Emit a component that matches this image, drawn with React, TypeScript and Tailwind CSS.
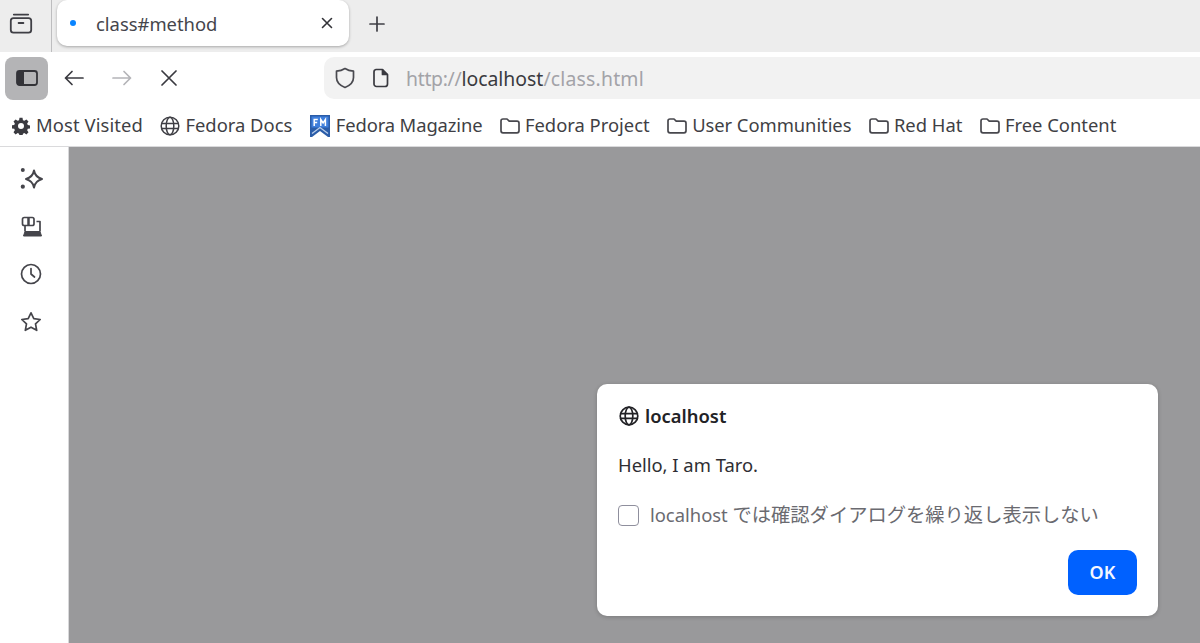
import React from "react";

const FONT = "font-['Noto_Sans','Noto_Sans_CJK_JP',sans-serif]";

function Svg({ size = 20, children, className = "", sw = 1.6 }: { size?: number; children: React.ReactNode; className?: string; sw?: number }) {
  return (
    <svg width={size} height={size} viewBox="0 0 20 20" fill="none" stroke="currentColor" strokeWidth={sw} strokeLinecap="round" strokeLinejoin="round" className={`shrink-0 ${className}`}>
      {children}
    </svg>
  );
}

const Globe = ({ size = 20, sw = 1.6 }: { size?: number; sw?: number }) => (
  <Svg size={size} sw={sw}>
    <circle cx="10" cy="10" r="8.800" />
    <path d="M1.600 7.600h16.800M1.600 12.400h16.800" />
    <ellipse cx="10" cy="10" rx="3.800" ry="8.800" />
  </Svg>
);

const Folder = () => (
  <svg width="20" height="20" viewBox="0 0 20 20" fill="none" stroke="#48484e" strokeWidth={1.7} strokeLinejoin="round" className="shrink-0">
    <path d="M1 5C1 3.800 1.800 3 3 3h4l2.200 2.200H17c1.200 0 2 .8 2 2v7.600c0 1.200-.8 2-2 2H3c-1.200 0-2-.8-2-2z" />
  </svg>
);

const Gear = () => (
  <svg width="18" height="18" viewBox="0 0 24 24" className="shrink-0">
    <path fill="#3a3a40" fillRule="evenodd" d="M10 1h4l.6 3.200 1.900.8 2.700-1.800 2.800 2.800-1.800 2.700.8 1.900 3 .6v4l-3 .6-.8 1.900 1.800 2.700-2.800 2.800-2.700-1.800-1.900.8-.6 3h-4l-.6-3-1.900-.8-2.700 1.800-2.800-2.800 1.800-2.700-.8-1.900-3.200-.6v-4l3.200-.6.8-1.900-1.800-2.700 2.800-2.800 2.700 1.800 1.900-.8zM12 8a4 4 0 1 0 0 8 4 4 0 0 0 0-8z" />
  </svg>
);

const FM = () => (
  <svg width="20" height="22" viewBox="0 0 20 22" className="shrink-0">
    <path fill="#2a5ca8" d="M0 0h20v22l-2 0-8-6-8 6-2 0z" />
    <path fill="#3f7fdc" d="M1.500 1.500h17v11l-8.500 0-8.500 0z" />
    <path fill="none" stroke="#fff" strokeWidth="1.500" d="M4.200 11V4.500h3.600M4.200 7.500h3M10.800 11V4.500l2.300 3.500 2.300-3.500V11" />
    <path fill="none" stroke="#b9cdea" strokeWidth="1.300" d="M2 18.500l8-6 8 6" />
  </svg>
);

const Bookmark = ({ icon, label, cls = "gap-[5px]" }: { icon: React.ReactNode; label: string; cls?: string }) => (
  <div className={`flex items-center text-[#3f3f45] ${cls}`}>
    {icon}
    <span className="whitespace-nowrap pb-[2px]">{label}</span>
  </div>
);

const SideIcon = ({ children, h = "h-[48px]" }: { children: React.ReactNode; h?: string }) => (
  <div className={`flex ${h} items-center justify-center text-[#45454b]`}>{children}</div>
);

export default function App() {
  return (
    <div className={`flex h-[643px] w-[1200px] flex-col overflow-hidden bg-white ${FONT}`}>
      {/* Tab strip */}
      <div className="flex h-[52px] shrink-0 items-start bg-[#ededed]">
        <div className="flex h-[52px] w-[52px] shrink-0 items-center justify-center border-r border-[#bdbdbf] pb-[6px] pr-[9px] text-[#3f3f45]">
          <Svg size={24} sw={1.5}>
            <rect x="1.500" y="6" width="17" height="12" rx="2.200" />
            <path d="M4 3h12M8 10h4" />
          </Svg>
        </div>
        <div className="ml-[5px] flex h-[46px] w-[292px] items-center rounded-[10px] bg-white pl-[13px] pr-[16px] shadow-[0_1px_3px_rgba(0,0,0,0.3)]">
          <span className="h-[6px] w-[6px] rounded-full bg-[#0a84ff]" />
          <span className="ml-[20px] flex-1 pt-[2px] text-[18.4px] text-[#45454b]">class#method</span>
          <svg width="12" height="12" viewBox="0 0 12 12" stroke="#333338" strokeWidth="1.600" strokeLinecap="round">
            <path d="M1.500 1.500l9 9M10.500 1.500l-9 9" />
          </svg>
        </div>
        <div className="ml-[20px] flex h-[48px] items-center text-[#3f3f45]">
          <svg width="16" height="16" viewBox="0 0 16 16" stroke="currentColor" strokeWidth="1.700" strokeLinecap="round">
            <path d="M8 1v14M1 8h14" />
          </svg>
        </div>
      </div>

      {/* Navigation */}
      <div className="flex h-[52px] shrink-0 items-center bg-white pl-[5px] pr-0">
        <div className="flex h-[43px] w-[43px] items-center justify-center rounded-[8px] bg-[#b4b4b6] text-[#333338]">
          <svg width="22" height="18" viewBox="0 0 22 18" fill="none">
            <rect x="1" y="2" width="20" height="14" rx="2.500" stroke="currentColor" strokeWidth="1.800" />
            <path d="M3 2h5v14H3a2 2 0 0 1-2-2V4a2 2 0 0 1 2-2z" fill="currentColor" />
          </svg>
        </div>
        <div className="ml-[16px] text-[#3a3a40]">
          <svg width="20" height="16" viewBox="0 0 20 16" fill="none" stroke="currentColor" strokeWidth="1.700" strokeLinecap="round" strokeLinejoin="round">
            <path d="M19 8H1.500M8 1.500L1.500 8 8 14.500" />
          </svg>
        </div>
        <div className="ml-[28px] text-[#b4b4b8]">
          <svg width="20" height="16" viewBox="0 0 20 16" fill="none" stroke="currentColor" strokeWidth="1.700" strokeLinecap="round" strokeLinejoin="round">
            <path d="M1 8h17.500M12 1.500L18.500 8 12 14.500" />
          </svg>
        </div>
        <div className="ml-[29px] text-[#3a3a40]">
          <svg width="16" height="16" viewBox="0 0 16 16" stroke="currentColor" strokeWidth="1.700" strokeLinecap="round">
            <path d="M1 1l14 14M15 1L1 15" />
          </svg>
        </div>
        <div className="ml-[147px] flex h-[42px] flex-1 items-center rounded-l-[10px] bg-[#f2f2f2] pl-[11px] text-[19.4px]">
          <svg width="20" height="22" viewBox="0 0 20 22" fill="none" stroke="#4a4a50" strokeWidth="1.700" strokeLinejoin="round" className="shrink-0">
            <path d="M10 1.500c2.500 1.600 5 2.400 8.500 2.700v6.300c0 4.700-3.500 8-8.500 10-5-2-8.500-5.300-8.500-10V4.200c3.500-.3 6-1.100 8.500-2.700z" />
          </svg>
          <svg width="16" height="20" viewBox="0 0 16 20" fill="none" stroke="#3a3a40" strokeWidth="1.700" strokeLinejoin="round" className="ml-[18px] shrink-0">
            <path d="M3 1.500h6.500l5 5V16a2.500 2.500 0 0 1-2.500 2.500H3.500A2.500 2.500 0 0 1 1 16V4a2.500 2.500 0 0 1 2-2.500z" />
            <path d="M9.500 1.500v5h5" fill="#3a3a40" />
          </svg>
          <span className="ml-[17px] whitespace-nowrap pt-[2px] text-[#a3a3a8]">
            <span className="tracking-[-0.3px]">http://</span>
            <span className="text-[#3a3a40]">localhost</span>
            <span className="tracking-[0.2px]">/class.html</span>
          </span>
        </div>
      </div>

      {/* Bookmarks */}
      <div className="flex h-[43px] shrink-0 items-center gap-[17.5px] border-b border-[#dadadc] bg-white pl-[12px] pt-[2px] text-[18.4px]">
        <Bookmark icon={<Gear />} label="Most Visited" cls="gap-[6px] tracking-[0.1px]" />
        <Bookmark icon={<Globe sw={1.5} />} label="Fedora Docs" />
        <Bookmark icon={<FM />} label="Fedora Magazine" cls="gap-[6px] tracking-[-0.12px]" />
        <Bookmark icon={<Folder />} label="Fedora Project" />
        <Bookmark icon={<Folder />} label="User Communities" cls="gap-[5px] tracking-[-0.06px]" />
        <Bookmark icon={<Folder />} label="Red Hat" />
        <Bookmark icon={<Folder />} label="Free Content" />
      </div>

      <div className="flex min-h-0 flex-1">
        {/* Sidebar */}
        <div className="flex w-[69px] shrink-0 flex-col border-r border-[#d8d8da] bg-white pr-[6px] pt-[8px]">
          <SideIcon>
            <svg width="24" height="24" viewBox="0 0 24 24" fill="none" stroke="currentColor" strokeWidth="2" strokeLinejoin="round" className="translate-x-[1px]">
              <path d="M14 3.500c.8 4.700 3 7 8 8.500-5 1.500-7.200 3.800-8 8.500-.8-4.700-3-7-8-8.500 5-1.500 7.200-3.800 8-8.500z" />
              <circle cx="2.800" cy="3" r="2" fill="currentColor" stroke="none" />
              <circle cx="2.800" cy="19.700" r="2.100" fill="currentColor" stroke="none" />
            </svg>
          </SideIcon>
          <SideIcon h="h-[47px]">
            <svg width="22" height="22" viewBox="0 0 22 22" fill="none" stroke="currentColor" strokeWidth="1.700" strokeLinejoin="round" className="translate-x-[1px]">
              <rect x="1.500" y="1.500" width="11.500" height="8" rx="1.800" />
              <path d="M7.500 1.500v8" strokeWidth="2.500" />
              <path d="M15.500 5.500H19v10M4 9.500v6" />
              <path d="M4 15.500h15l1.500 4.500h-18z" fill="currentColor" strokeWidth="1" />
            </svg>
          </SideIcon>
          <SideIcon>
            <svg width="22" height="22" viewBox="0 0 22 22" fill="none" stroke="currentColor" strokeWidth="1.700" strokeLinecap="round" strokeLinejoin="round">
              <circle cx="11" cy="11" r="9.500" />
              <path d="M11 5.500V11l3.500 3" />
            </svg>
          </SideIcon>
          <SideIcon>
            <svg width="22" height="22" viewBox="0 0 22 22" fill="none" stroke="currentColor" strokeWidth="1.700" strokeLinejoin="round">
              <path d="M11 1.800l2.800 5.900 6.400.8-4.700 4.400 1.200 6.400-5.700-3.100-5.700 3.100 1.200-6.400L1.800 8.500l6.400-.8z" />
            </svg>
          </SideIcon>
        </div>

        {/* Page overlay with dialog */}
        <div className="flex flex-1 items-end justify-end bg-[#99999b] pb-[27px] pr-[42px]">
          <div className="flex h-[232px] w-[561px] flex-col rounded-[10px] bg-white pl-[21px] pr-[21px] shadow-[0_1px_4px_rgba(0,0,0,0.2)]">
            <div className="ml-[1px] mt-[21px] flex h-[22px] items-center gap-[6px] text-[#222226]">
              <Globe size={20} sw={1.7} />
              <span className="text-[18.4px] font-semibold">localhost</span>
            </div>
            <div className="mt-[26px] h-[24px] text-[18.4px] leading-[24px] text-[#2e2e33]">Hello, I am Taro.</div>
            <div className="mt-[26px] flex h-[24px] items-center">
              <span className="h-[21px] w-[21px] shrink-0 rounded-[4px] border border-[#8f8f9d] bg-white" />
              <span className="ml-[11px] whitespace-nowrap text-[18.4px] text-[#6a6a70]">
                localhost <span className="text-[19.3px]">では確認ダイアログを繰り返し表示しない</span>
              </span>
            </div>
            <div className="mt-[23px] flex justify-end">
              <button className="h-[45px] w-[69px] rounded-[10px] bg-[#0061ff] text-[18px] font-semibold text-[#f4f8ff]">OK</button>
            </div>
          </div>
        </div>
      </div>
    </div>
  );
}
